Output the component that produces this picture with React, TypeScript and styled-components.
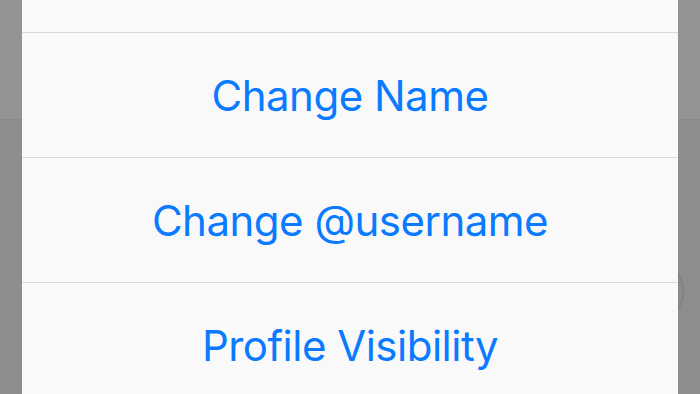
import React from "react";
import styled, { createGlobalStyle } from "styled-components";

const Global = createGlobalStyle`
  html, body { margin: 0; padding: 0; background: #8c8c8c; }
  #root { width: 700px; height: 394px; }
`;

const Screen = styled.div`
  position: relative;
  width: 700px;
  height: 394px;
  overflow: hidden;
  background: #8c8c8c;
  font-family: Inter, "Liberation Sans", sans-serif;
`;

const Page = styled.div`
  display: flex;
  flex-direction: column;
  height: 100%;
`;

const NavBand = styled.div`
  height: 119px;
  flex: none;
  background: #949494;
  border-bottom: 1px solid #8a8a8a;
`;

const PageBody = styled.div`
  flex: 1;
  position: relative;
  background: #8d8d8d;
`;

const PillButton = styled.div`
  position: absolute;
  right: 16px;
  top: 138px;
  width: 120px;
  height: 66px;
  border-radius: 33px;
  background: #8a8a8a;
  box-shadow: inset 0 0 0 1px rgba(0, 0, 0, 0.1);
`;

const Sheet = styled.div`
  position: absolute;
  left: 22px;
  right: 22px;
  top: 0;
  bottom: 0;
  display: flex;
  flex-direction: column;
  background: #f9f9f9;
`;

const Row = styled.button<{ $first?: boolean }>`
  all: unset;
  box-sizing: border-box;
  flex: none;
  display: flex;
  align-items: center;
  justify-content: center;
  height: ${(p) => (p.$first ? "32px" : "125px")};
  border-top: ${(p) => (p.$first ? "none" : "1px solid #dadada")};
  color: #0a7aff;
  font-size: 42px;
  letter-spacing: -0.5px;
  font-family: Inter, "Liberation Sans", sans-serif;
  cursor: pointer;
`;

export default function App() {
  return (
    <>
      <Global />
      <Screen>
        <Page>
          <NavBand />
          <PageBody>
            <PillButton />
          </PageBody>
        </Page>
        <Sheet>
          <Row $first />
          <Row>Change Name</Row>
          <Row>Change @username</Row>
          <Row>Profile Visibility</Row>
        </Sheet>
      </Screen>
    </>
  );
}
